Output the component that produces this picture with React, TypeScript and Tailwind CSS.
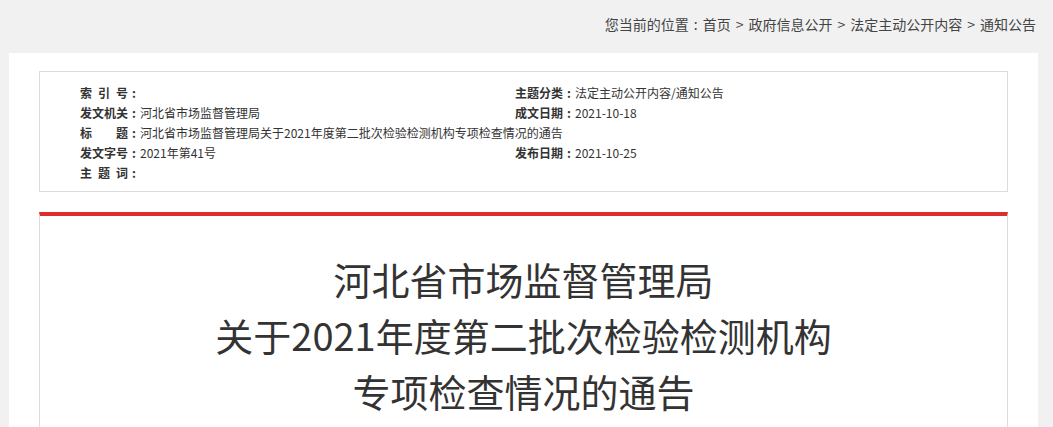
const FONT = "font-['Microsoft_YaHei','Noto_Sans_CJK_SC',sans-serif]";

function Spread({ text }: { text: string }) {
  // labels like "索 引 号" are stretched to the width of four characters
  return (
    <span className="flex w-[48px] justify-between">
      {text.split('').map((c, i) => (
        <span key={i}>{c}</span>
      ))}
    </span>
  );
}

function Field({ label, value, spread }: { label: string; value: string; spread?: boolean }) {
  return (
    <div className="flex items-center h-[20px] whitespace-nowrap">
      <span className="flex font-bold">
        {spread ? <Spread text={label} /> : <span>{label}</span>}
        <span className="w-[12px] text-center">:</span>
      </span>
      <span>{value}</span>
    </div>
  );
}

const crumbs = ['首页', '政府信息公开', '法定主动公开内容', '通知公告'];

export default function App() {
  return (
    <div className={`${FONT} w-[1053px] h-[427px] overflow-hidden bg-[#f1f1f1] text-[#333]`}>
      <div className="h-[53px] flex items-center justify-end pr-[17px] pb-[4px] text-[14px] text-[#444]">
        <span>您当前的位置</span>
        <span className="w-[14px] text-center">:</span>
        {crumbs.map((c, i) => (
          <span key={c} className="flex">
            {i > 0 && <span className="mx-[5px]">&gt;</span>}
            <span>{c}</span>
          </span>
        ))}
      </div>

      <div className="ml-[9px] w-[1029px] bg-white px-[30px] pt-[18px] h-[400px]">
        <div className="border border-[#dcdcdc] pl-[40px] pt-[11px] pb-[8px] text-[12px]">
          <div className="grid grid-cols-[435px_1fr]">
            <Field label="索引号" value="" spread />
            <Field label="主题分类" value="法定主动公开内容/通知公告" />
            <Field label="发文机关" value="河北省市场监督管理局" />
            <Field label="成文日期" value="2021-10-18" />
            <div className="col-span-2">
              <Field label="标题" value="河北省市场监督管理局关于2021年度第二批次检验检测机构专项检查情况的通告" spread />
            </div>
            <Field label="发文字号" value="2021年第41号" />
            <Field label="发布日期" value="2021-10-25" />
            <Field label="主题词" value="" spread />
          </div>
        </div>

        <div className="mt-[20px] border-t-4 border-t-[#dd2e2e] border-x border-x-[#dcdcdc] h-[300px] pt-[35px]">
          <h1 className="text-center text-[38px] leading-[56px] font-normal text-[#333]">
            河北省市场监督管理局
            <br />
            关于2021年度第二批次检验检测机构
            <br />
            专项检查情况的通告
          </h1>
        </div>
      </div>
    </div>
  );
}
